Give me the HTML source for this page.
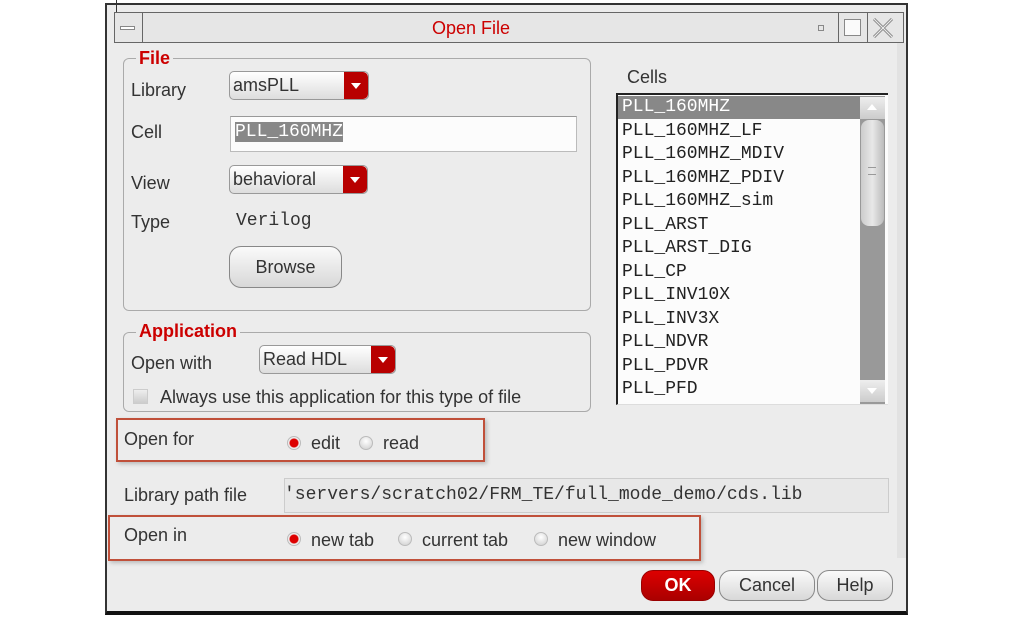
<!DOCTYPE html>
<html><head><meta charset="utf-8"><style>
*{margin:0;padding:0;box-sizing:border-box}
body{width:1013px;height:618px;background:#fff;position:relative;overflow:hidden;font-family:"Liberation Sans",sans-serif;color:#333}
.a{position:absolute}
.win{left:105px;top:3px;width:803px;height:612px;background:#ececec;border:2px solid #333;border-bottom:4px solid #111}
.t{font-size:18px;color:#333}
.mono{font-family:"Liberation Mono",monospace}
.grp{border:1px solid #aaa;border-radius:6px}
.gl{background:#ececec;color:#c00;font-weight:bold;font-size:18px;padding:0 3px}
.combo{border:1px solid #999;border-radius:5px;background:linear-gradient(#fff,#ddd);font-size:18px;color:#333;padding-left:3px;line-height:26px;overflow:hidden}
.combo i{position:absolute;right:0;top:0;bottom:0;width:24px;background:#b80000;border-radius:0 5px 5px 0}
.combo i:after{content:"";position:absolute;left:7px;top:11px;border:5px solid transparent;border-top:6px solid #fff;border-bottom:0}
.btn{border:1px solid #888;border-radius:12px;background:linear-gradient(#fafafa,#d8d8d8);text-align:center;font-size:18px;color:#333}
.rad{width:14px;height:14px;border-radius:50%;background:radial-gradient(circle at 50% 35%,#fff,#ccc);border:1px solid #bbb}
.rad.on{background:radial-gradient(circle,#d00 0 4px,#eee 5px)}
.red{border:2px solid #c0503a;box-shadow:2px 2px 4px #bbb}
.li{position:absolute;left:4px;font-size:18px;font-family:"Liberation Mono",monospace;color:#222;height:23.5px;line-height:23.5px}
</style></head><body>
<div class="a win"></div>
<div class="a" style="left:114px;top:12px;width:790px;height:31px;border:1px solid #666;background:#e6e6e6"></div>
<div class="a" style="left:142px;top:12px;width:1px;height:31px;background:#666"></div>
<div class="a" style="left:120px;top:26px;width:15px;height:4px;border:1px solid #888;background:#fff"></div>
<div class="a" style="left:116px;top:0;width:1px;height:12px;background:#333"></div>
<div class="a" style="left:432px;top:18px;font-size:18px;color:#c00">Open File</div>
<div class="a" style="left:838px;top:12px;width:1px;height:31px;background:#666"></div>
<div class="a" style="left:867px;top:12px;width:1px;height:31px;background:#666"></div>
<div class="a" style="left:818px;top:25px;width:6px;height:6px;border:1px solid #888"></div>
<div class="a" style="left:844px;top:19px;width:17px;height:17px;border:1px solid #888;background:#fafafa"></div>
<svg class="a" style="left:872px;top:18px" width="22" height="20"><path d="M2 1L20 19M20 1L2 19" stroke="#888" stroke-width="3"/><path d="M2 1L20 19M20 1L2 19" stroke="#eee" stroke-width="1"/></svg>

<div class="a grp" style="left:123px;top:58px;width:468px;height:253px"></div>
<div class="a gl" style="left:136px;top:48px">File</div>
<div class="a t" style="left:131px;top:80px">Library</div>
<div class="a combo" style="left:229px;top:71px;width:140px;height:29px">amsPLL<i></i></div>
<div class="a t" style="left:131px;top:122px">Cell</div>
<div class="a" style="left:230px;top:116px;width:347px;height:36px;border:1px solid #bbb;border-top-color:#999;background:#fcfcfc"></div>
<div class="a mono" style="left:235px;top:122px;font-size:18px;background:#888;color:#fff;line-height:20px;height:20px">PLL_160MHZ</div>
<div class="a t" style="left:131px;top:173px">View</div>
<div class="a combo" style="left:229px;top:165px;width:139px;height:29px">behavioral<i></i></div>
<div class="a t" style="left:131px;top:212px">Type</div>
<div class="a mono" style="left:236px;top:211px;font-size:18px;color:#333">Verilog</div>
<div class="a btn" style="left:229px;top:246px;width:113px;height:42px;line-height:40px">Browse</div>

<div class="a grp" style="left:123px;top:332px;width:468px;height:80px"></div>
<div class="a gl" style="left:136px;top:321px">Application</div>
<div class="a t" style="left:131px;top:353px">Open with</div>
<div class="a combo" style="left:259px;top:345px;width:137px;height:29px">Read HDL<i></i></div>
<div class="a" style="left:133px;top:389px;width:15px;height:15px;background:linear-gradient(#eee,#ccc);border:1px solid #ccc"></div>
<div class="a t" style="left:160px;top:387px">Always use this application for this type of file</div>

<div class="a red" style="left:116px;top:418px;width:369px;height:44px"></div>
<div class="a t" style="left:124px;top:429px">Open for</div>
<div class="a rad on" style="left:287px;top:436px"></div>
<div class="a t" style="left:311px;top:433px">edit</div>
<div class="a rad" style="left:359px;top:436px"></div>
<div class="a t" style="left:383px;top:433px">read</div>

<div class="a t" style="left:124px;top:485px">Library path file</div>
<div class="a" style="left:284px;top:478px;width:605px;height:35px;border:1px solid #ccc;background:#e8e8e8"></div>
<div class="a mono" style="left:284px;top:485px;font-size:18px;color:#333">'servers/scratch02/FRM_TE/full_mode_demo/cds.lib</div>

<div class="a red" style="left:108px;top:515px;width:593px;height:46px"></div>
<div class="a t" style="left:124px;top:525px">Open in</div>
<div class="a rad on" style="left:287px;top:532px"></div>
<div class="a t" style="left:311px;top:530px">new tab</div>
<div class="a rad" style="left:398px;top:532px"></div>
<div class="a t" style="left:422px;top:530px">current tab</div>
<div class="a rad" style="left:534px;top:532px"></div>
<div class="a t" style="left:558px;top:530px">new window</div>

<div class="a btn" style="left:641px;top:570px;width:74px;height:31px;line-height:29px;background:linear-gradient(#d00,#a00);border-color:#900;color:#fff;font-weight:bold">OK</div>
<div class="a btn" style="left:719px;top:570px;width:96px;height:31px;line-height:29px">Cancel</div>
<div class="a btn" style="left:817px;top:570px;width:76px;height:31px;line-height:29px">Help</div>

<div class="a t" style="left:627px;top:67px">Cells</div>
<div class="a" style="left:616px;top:93px;width:272px;height:312px;background:#fcfcfc;border-top:2px solid #222;border-left:2px solid #222;border-bottom:1px solid #ddd">
<div class="a" style="left:0;top:1px;width:242px;height:23px;background:#888"></div>
<div class="li" style="top:1px;color:#fff">PLL_160MHZ</div>
<div class="li" style="top:24.5px">PLL_160MHZ_LF</div>
<div class="li" style="top:48px">PLL_160MHZ_MDIV</div>
<div class="li" style="top:71.5px">PLL_160MHZ_PDIV</div>
<div class="li" style="top:95px">PLL_160MHZ_sim</div>
<div class="li" style="top:118.5px">PLL_ARST</div>
<div class="li" style="top:142px">PLL_ARST_DIG</div>
<div class="li" style="top:165.5px">PLL_CP</div>
<div class="li" style="top:189px">PLL_INV10X</div>
<div class="li" style="top:212.5px">PLL_INV3X</div>
<div class="li" style="top:236px">PLL_NDVR</div>
<div class="li" style="top:259.5px">PLL_PDVR</div>
<div class="li" style="top:283px">PLL_PFD</div>
<div class="a" style="left:242px;top:1px;width:25px;height:308px;background:#999"></div>
<div class="a" style="left:242px;top:2px;width:25px;height:22px;background:linear-gradient(#eee,#ccc)"></div>
<div class="a" style="left:249px;top:9px;border:5px solid transparent;border-bottom:6px solid #fff;border-top:0"></div>
<div class="a" style="left:243px;top:25px;width:23px;height:106px;background:linear-gradient(90deg,#ccc,#e8e8e8,#bbb);border-radius:8px"></div>
<div class="a" style="left:250px;top:72px;width:8px;height:8px;border-top:1px solid #999;border-bottom:1px solid #999"></div>
<div class="a" style="left:242px;top:285px;width:25px;height:22px;background:linear-gradient(#eee,#ccc)"></div>
<div class="a" style="left:249px;top:293px;border:5px solid transparent;border-top:6px solid #fff;border-bottom:0"></div>
</div>
<div class="a" style="left:897px;top:43px;width:9px;height:515px;background:#e2e2e2"></div>
</body></html>
